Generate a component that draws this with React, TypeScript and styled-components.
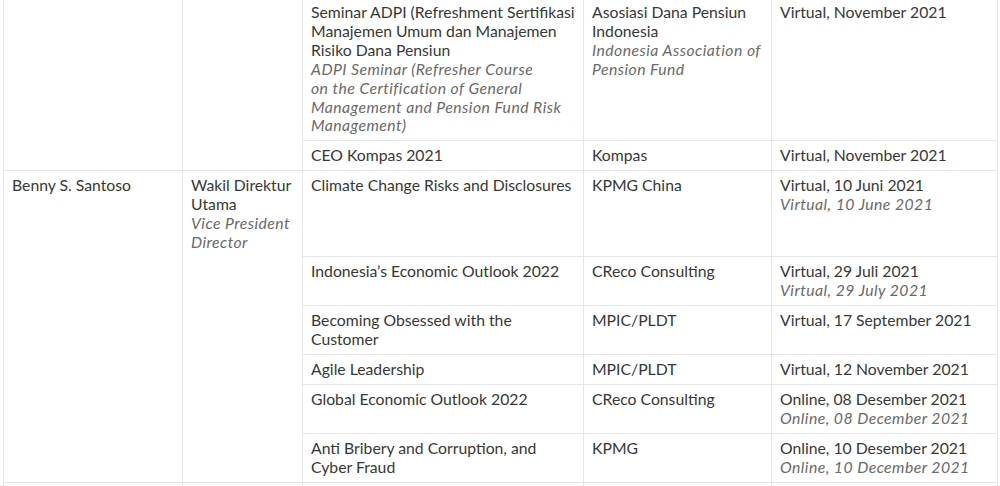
import React from "react";
import styled, { createGlobalStyle } from "styled-components";

const GlobalStyle = createGlobalStyle`
  html, body {
    margin: 0;
    padding: 0;
    background: #ffffff;
    overflow: hidden;
  }
`;

type Training = {
  title: string;
  titleEn?: string;
  organizer: string;
  organizerEn?: string;
  place: string;
  placeEn?: string;
};

type Person = {
  name: string;
  role: string;
  roleEn?: string;
  trainings: Training[];
};

const columns = [179, 120, 281, 188, 226];

// line breaks follow the source document
const people: Person[] = [
  {
    name: "",
    role: "",
    trainings: [
      {
        title:
          "Seminar ADPI (Refreshment Sertifikasi\nManajemen Umum dan Manajemen\nRisiko Dana Pensiun",
        titleEn:
          "ADPI Seminar (Refresher Course\non the Certification of General\nManagement and Pension Fund Risk\nManagement)",
        organizer: "Asosiasi Dana Pensiun\nIndonesia",
        organizerEn: "Indonesia Association of\nPension Fund",
        place: "Virtual, November 2021",
      },
      {
        title: "CEO Kompas 2021",
        organizer: "Kompas",
        place: "Virtual, November 2021",
      },
    ],
  },
  {
    name: "Benny S. Santoso",
    role: "Wakil Direktur\nUtama",
    roleEn: "Vice President\nDirector",
    trainings: [
      {
        title: "Climate Change Risks and Disclosures",
        organizer: "KPMG China",
        place: "Virtual, 10 Juni 2021",
        placeEn: "Virtual, 10 June 2021",
      },
      {
        title: "Indonesia\u2019s Economic Outlook 2022",
        organizer: "CReco Consulting",
        place: "Virtual, 29 Juli 2021",
        placeEn: "Virtual, 29 July 2021",
      },
      {
        title: "Becoming Obsessed with the\nCustomer",
        organizer: "MPIC/PLDT",
        place: "Virtual, 17 September 2021",
      },
      {
        title: "Agile Leadership",
        organizer: "MPIC/PLDT",
        place: "Virtual, 12 November 2021",
      },
      {
        title: "Global Economic Outlook 2022",
        organizer: "CReco Consulting",
        place: "Online, 08 Desember 2021",
        placeEn: "Online, 08 December 2021",
      },
      {
        title: "Anti Bribery and Corruption, and\nCyber Fraud",
        organizer: "KPMG",
        place: "Online, 10 Desember 2021",
        placeEn: "Online, 10 December 2021",
      },
    ],
  },
  {
    name: "",
    role: "",
    trainings: [{ title: "", organizer: "", place: "" }],
  },
];

const Bilingual = ({ id, en }: { id: string; en?: string }) => (
  <>
    {id}
    {en && <English>{en}</English>}
  </>
);

const App = () => {
  return (
    <Page>
      <GlobalStyle />
      <Table>
        <colgroup>
          {columns.map((w, i) => (
            <Col key={i} $w={w} />
          ))}
        </colgroup>
        <tbody>
          {people.map((p, pi) =>
            p.trainings.map((t, ti) => {
              const last = ti === p.trainings.length - 1;
              return (
                <tr key={`${pi}-${ti}`}>
                  <PersonCell $first={ti === 0} $last={last}>
                    {ti === 0 && p.name}
                  </PersonCell>
                  <PersonCell $first={ti === 0} $last={last}>
                    {ti === 0 && <Bilingual id={p.role} en={p.roleEn} />}
                  </PersonCell>
                  <Cell>
                    <Bilingual id={t.title} en={t.titleEn} />
                  </Cell>
                  <Cell>
                    <Bilingual id={t.organizer} en={t.organizerEn} />
                  </Cell>
                  <Cell>
                    <Bilingual id={t.place} en={t.placeEn} />
                  </Cell>
                </tr>
              );
            })
          )}
        </tbody>
      </Table>
    </Page>
  );
};

export default App;

const Page = styled.div`
  padding: 0 3px;
  margin-top: -3px;
  font-family: Lato, "Liberation Sans", sans-serif;
  font-size: 15.75px;
  line-height: 18.9px;
  color: #383838;
`;

const Table = styled.table`
  width: 994px;
  table-layout: fixed;
  border-collapse: collapse;
`;

const Col = styled.col<{ $w: number }>`
  width: ${(p) => p.$w}px;
`;

const Cell = styled.td`
  border: 1px solid #e6e6e6;
  padding: 5px 6px 5px 8px;
  vertical-align: top;
  text-align: left;
  white-space: pre-line;
  height: 18.9px;
`;

/* name / role column: one visual cell per person, joined across rows */
const PersonCell = styled(Cell)<{ $first: boolean; $last: boolean }>`
  ${(p) => (p.$first ? "" : "border-top-style: hidden;")}
  ${(p) => (p.$last ? "" : "border-bottom-style: hidden;")}
`;

const English = styled.div`
  font-style: italic;
  letter-spacing: 0.45px;
  color: #6a6a6a;
`;
